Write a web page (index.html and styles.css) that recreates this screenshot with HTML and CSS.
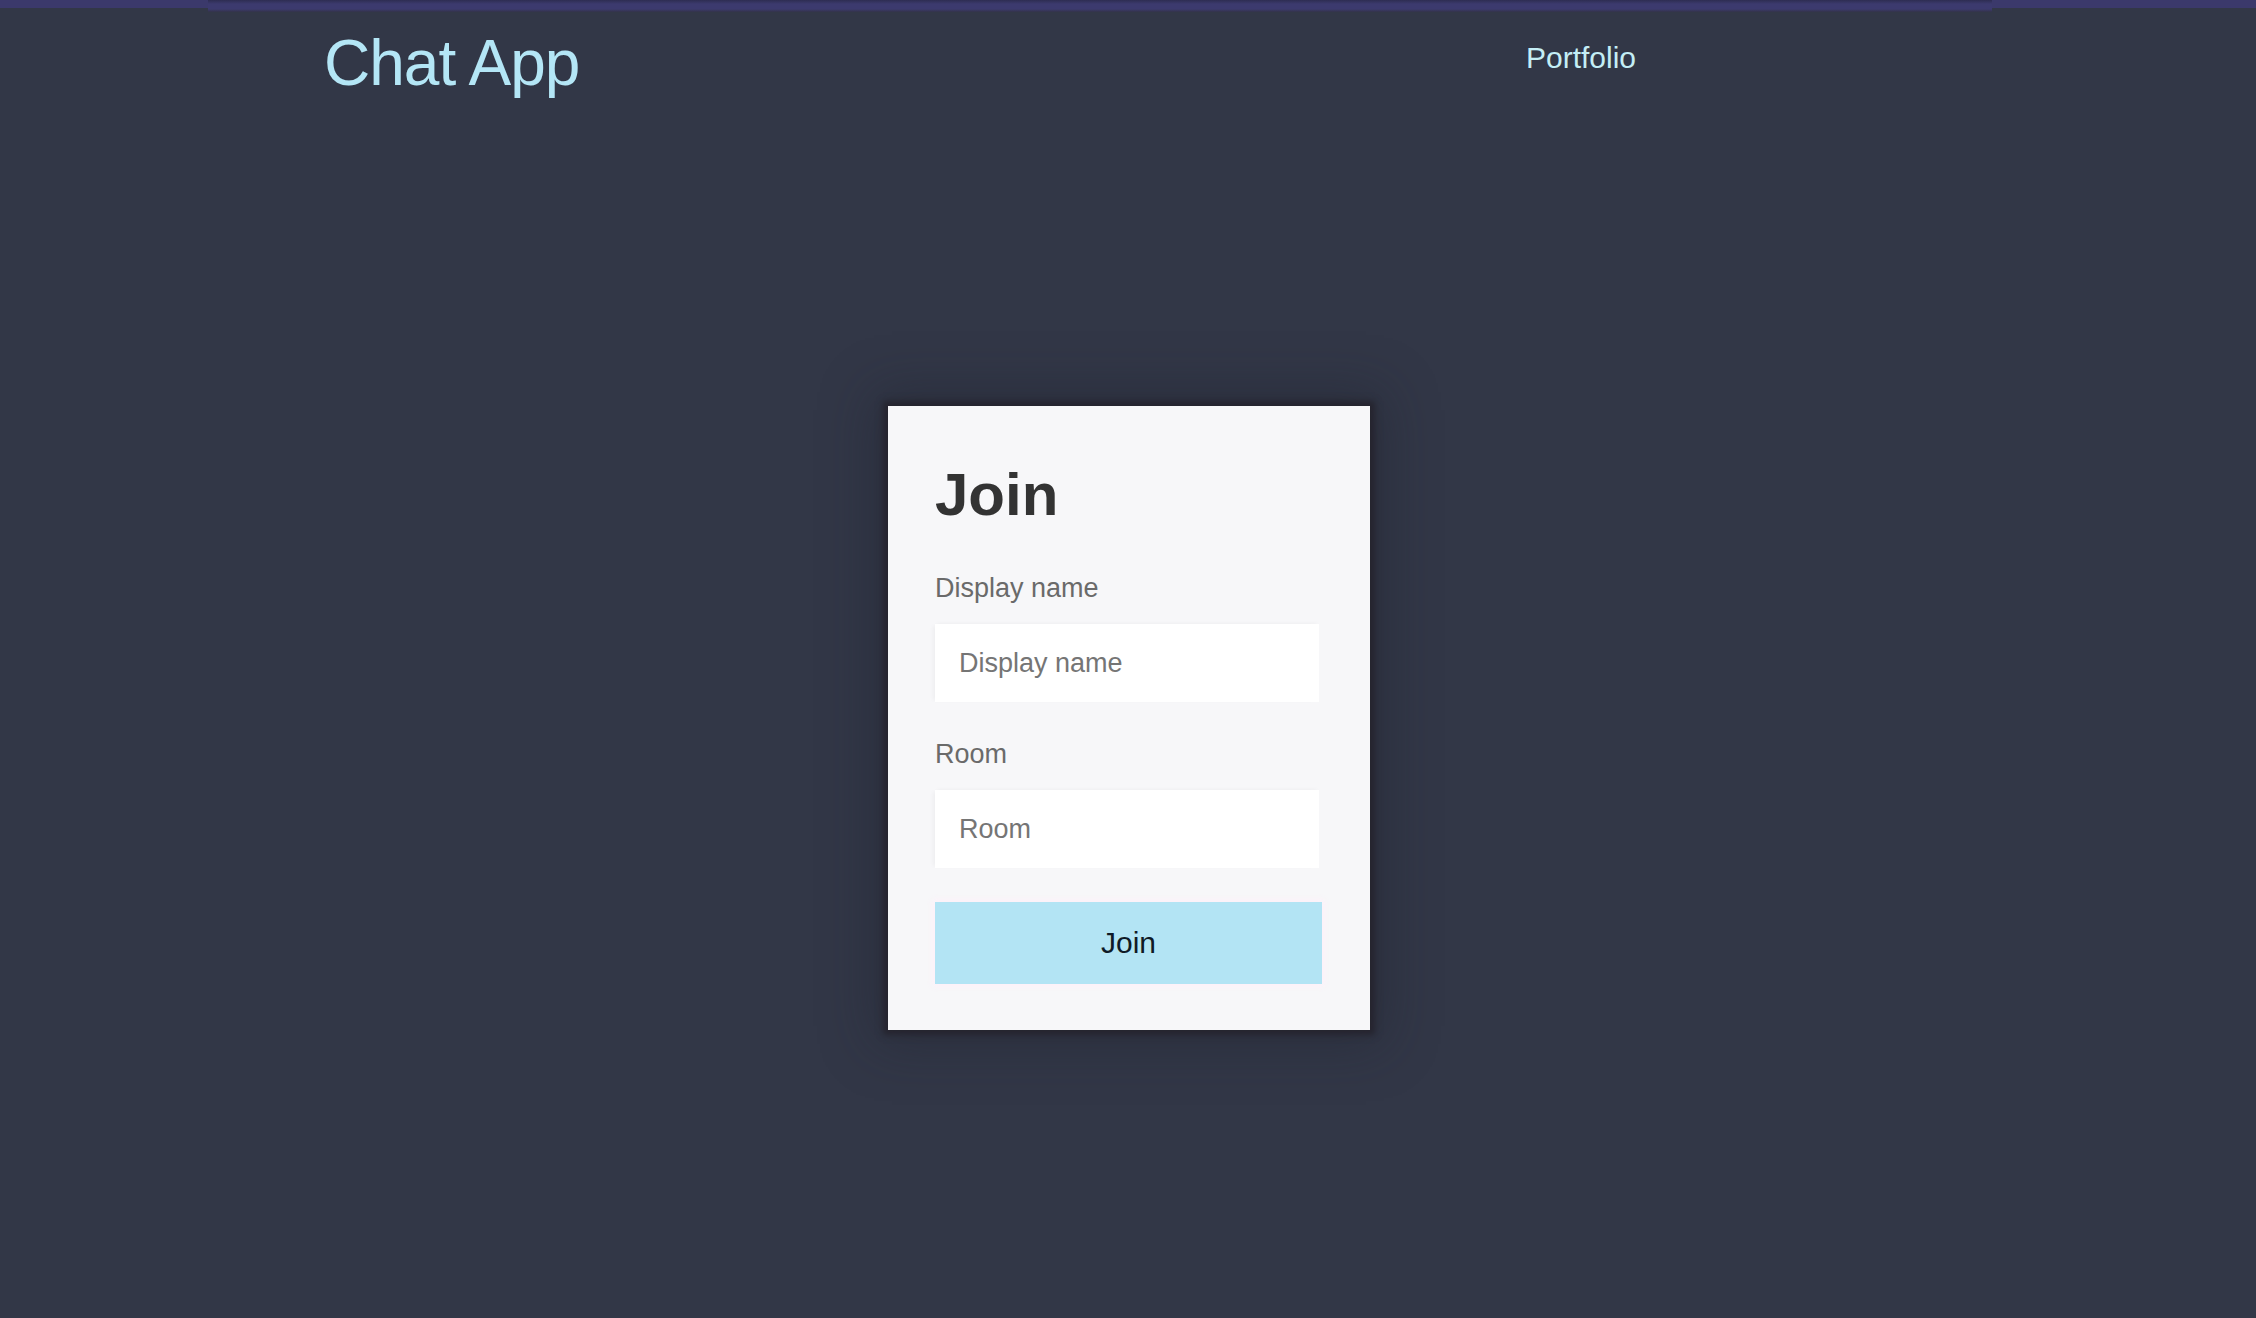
FILE: index.html
```html
<!DOCTYPE html>
<html lang="en">
<head>
<meta charset="utf-8">
<title>Chat App</title>
<link rel="stylesheet" href="styles.css">
</head>
<body>
<div class="topstrip"><div class="topstrip-seg"></div></div>
<header class="header">
  <a class="brand" href="#">Chat App</a>
  <a class="navlink" href="#">Portfolio</a>
</header>
<main class="main">
  <form class="card">
    <h1 class="title">Join</h1>
    <label class="label" for="name">Display name</label>
    <input class="input" id="name" type="text" placeholder="Display name">
    <label class="label label-room" for="room">Room</label>
    <input class="input" id="room" type="text" placeholder="Room">
    <button class="btn" type="button">Join</button>
  </form>
</main>
</body>
</html>
```
FILE: styles.css
```css
* { box-sizing: border-box; }
html, body { margin: 0; padding: 0; }
body {
  background: #323747;
  font-family: "Liberation Sans", Arial, sans-serif;
  height: 1318px;
  display: flex;
  flex-direction: column;
  overflow: hidden;
}
.topstrip {
  height: 8px;
  background: #3b396b;
  flex: none;
}
.topstrip-seg {
  margin-left: 208px;
  width: 1784px;
  height: 12px;
  background: linear-gradient(#2e2d52 0px, #3c3a6e 4px, #3c3a6e 9px, #333349 12px);
}
.header {
  height: 110px;
  flex: none;
  display: grid;
  grid-template-columns: 1202px auto;
  align-items: start;
  padding-left: 324px;
}
.brand {
  font-size: 64px;
  line-height: 74px;
  margin-top: 18px;
  color: #b4e6f6;
  text-decoration: none;
  letter-spacing: -1px;
  justify-self: start;
}
.navlink {
  font-size: 30px;
  line-height: 34px;
  margin-top: 33px;
  color: #c4eef6;
  text-decoration: none;
}
.main {
  flex: 1;
  display: flex;
  align-items: center;
  justify-content: center;
}
.card {
  width: 482px;
  height: 624px;
  background: #f7f7f9;
  padding: 54px 48px 46px 47px;
  display: flex;
  flex-direction: column;
  box-shadow: 0 0 6px 5px rgba(36, 34, 44, 0.85), 0 0 50px 14px rgba(30, 32, 44, 0.35);
  margin-left: 2px;
}
.title {
  margin: 0;
  font-size: 60px;
  line-height: 70px;
  font-weight: 700;
  color: #333333;
}
.label {
  display: block;
  font-size: 27px;
  line-height: 32px;
  color: #6a6a6a;
  margin-top: 42px;
  margin-bottom: 20px;
}
.label-room { margin-top: 36px; }
.input {
  width: 384px;
  height: 78px;
  border: none;
  outline: none;
  background: #ffffff;
  padding: 0 24px;
  font-family: "Liberation Sans", Arial, sans-serif;
  font-size: 27px;
  color: #333;
  box-shadow: -4px 0 4px -2px rgba(0,0,0,0.04), 0 -3px 4px -2px rgba(0,0,0,0.03);
}
.input::placeholder { color: #757575; opacity: 1; }
.btn {
  margin-top: 34px;
  width: 387px;
  height: 82px;
  border: none;
  background: #b3e4f4;
  color: #0f1a26;
  font-family: "Liberation Sans", Arial, sans-serif;
  font-size: 30px;
  padding: 0;
  box-shadow: 0 0 6px 2px rgba(255, 240, 250, 0.9);
}
```
